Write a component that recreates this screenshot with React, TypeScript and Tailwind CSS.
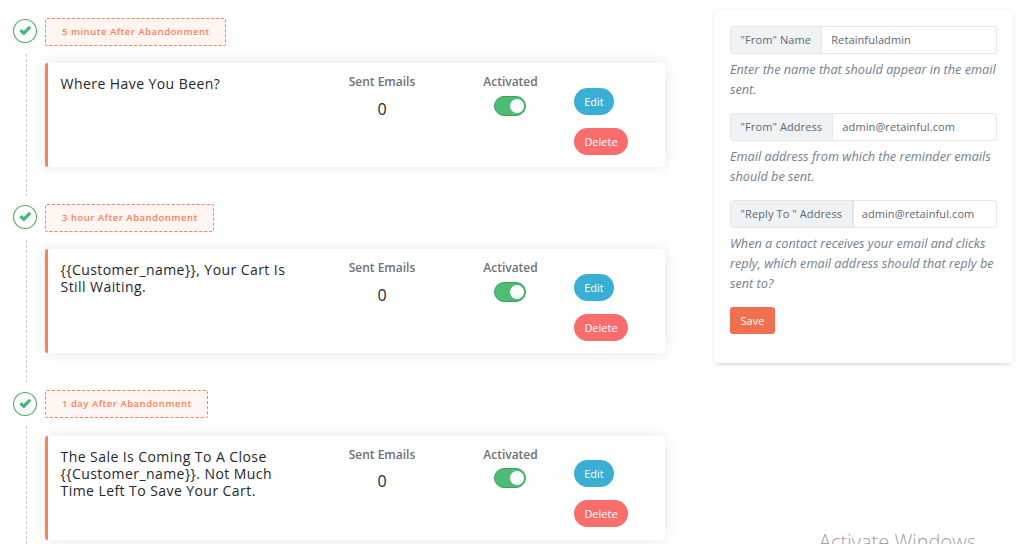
type Step = { delay: string; subject: string; sent: number };

const steps: Step[] = [
  { delay: '5 minute After Abandonment', subject: 'Where Have You Been?', sent: 0 },
  { delay: '3 hour After Abandonment', subject: '{{Customer_name}}, Your Cart Is Still Waiting.', sent: 0 },
  {
    delay: '1 day After Abandonment',
    subject: 'The Sale Is Coming To A Close {{Customer_name}}. Not Much Time Left To Save Your Cart.',
    sent: 0,
  },
];

function CheckBadge() {
  return (
    <svg className="block h-6 w-6 shrink-0" viewBox="0 0 24 24" fill="none">
      <circle cx="12" cy="12" r="11.45" stroke="#4fb05c" strokeWidth="1.1" />
      <path d="M7.4 11.2 L10.8 14.2 L17.2 7.8" stroke="#41b877" strokeWidth="3.2" />
    </svg>
  );
}

function Toggle() {
  return (
    <div className="flex h-5 w-8 items-center justify-end rounded-full border border-[#3d9f60] bg-[#4dbd74] pr-px">
      <div className="h-3.5 w-3.5 rounded-full bg-white" />
    </div>
  );
}

function StepRow({ step }: { step: Step }) {
  return (
    <div className="flex h-[186.2px] shrink-0">
      <div className="flex w-8 shrink-0 flex-col pt-[1.2px]">
        <CheckBadge />
        <svg className="mt-[10.8px] ml-[13px] block h-[142px] w-px" viewBox="0 0 1 142">
          <path d="M.5 0V142" stroke="#cfcfcf" strokeWidth="1" strokeDasharray="3 2" />
        </svg>
      </div>
      <div className="flex flex-col items-start">
        <div className="flex h-7 items-center rounded-[2px] border border-dashed border-[#ff7f50] bg-[#fff6f3] pr-[15px] pl-4 text-[9.5px] font-semibold tracking-[0.5px] whitespace-nowrap text-[#ff7f50]">
          {step.delay}
        </div>
        <div className="mt-[17.2px] flex h-[104px] w-[620px] rounded-[3px] border-l-[3px] border-[#ff7f50] bg-white shadow-[0_0_14px_rgba(0,0,0,0.1)]">
          <div className="w-[257px] pt-3 pl-[12.6px] text-[14px] leading-[17px] font-medium tracking-[0.43px] text-[#23282c]">
            {step.subject}
          </div>
          <div className="flex w-[154px] flex-col items-center pt-[10px]">
            <div className="text-[12px] leading-[18px] font-semibold text-[#6f7174]">Sent Emails</div>
            <div className="mt-[6.8px] text-[16px] leading-[22px] font-medium text-[#23282c]">{step.sent}</div>
          </div>
          <div className="flex w-[103px] flex-col items-center pt-[10px]">
            <div className="text-[12px] leading-[18px] font-semibold text-[#6f7174]">Activated</div>
            <div className="mt-[4.8px] mr-[2px]">
              <Toggle />
            </div>
          </div>
          <div className="flex flex-col items-start gap-[13px] pt-[24.8px] pl-[12px] text-[11px] font-medium text-white">
            <button className="flex h-[27px] w-10 items-center justify-center rounded-full bg-[#3aafd6] pt-px">Edit</button>
            <button className="flex h-[27px] w-[54px] items-center justify-center rounded-full bg-[#f96d6d] pt-px">Delete</button>
          </div>
        </div>
      </div>
    </div>
  );
}

function Field({ label, value, hint, nested = false }: { label: string; value: string; hint: string; nested?: boolean }) {
  return (
    <div>
      <div className="flex h-7 w-[267px] overflow-hidden rounded-[3px] border border-[#e4e7ea] text-[11px] whitespace-nowrap text-[#5c6873]">
        <div className="flex items-center border-r border-[#e4e7ea] bg-[#f0f3f5] px-[9.6px] tracking-[0.1px]">{label}</div>
        <div
          className={
            nested
              ? 'flex items-center border-l border-[#e4e7ea] px-2 pt-px tracking-[0.1px]'
              : 'flex items-center px-[9.6px] tracking-[0.1px]'
          }
        >
          {value}
        </div>
      </div>
      <p className="mt-[5px] mb-px w-[268px] text-[12.7px] leading-5 text-[#73818f] italic">{hint}</p>
    </div>
  );
}

export default function App() {
  return (
    <div className="relative flex h-[544px] w-[1017px] items-start overflow-hidden bg-white font-['Open_Sans',sans-serif]">
      <div className="flex flex-col pt-[18px] pl-[13px]">
        {steps.map((s) => (
          <StepRow key={s.delay} step={s} />
        ))}
      </div>
      <div className="mt-[10px] ml-[49px] flex h-[353px] w-[299px] flex-col gap-[13px] rounded-[4px] bg-white pt-4 pl-4 shadow-[0_0_5px_rgba(0,0,0,0.08),0_4px_5px_-3px_rgba(0,0,0,0.14)]">
        <Field label={'"From" Name'} value="Retainfuladmin" hint="Enter the name that should appear in the email sent." />
        <Field label={'"From" Address'} value="admin@retainful.com" hint="Email address from which the reminder emails should be sent." />
        <Field
          nested
          label={'"Reply To " Address'}
          value="admin@retainful.com"
          hint="When a contact receives your email and clicks reply, which email address should that reply be sent to?"
        />
        <button className="flex h-[27px] w-[45px] items-center justify-center rounded-[3px] bg-[#f27052] pt-px text-[11px] font-medium text-white">
          Save
        </button>
      </div>
      <div className="absolute top-[528px] left-[819px] text-[20px] leading-7 font-light whitespace-nowrap text-[#a0a0a0]">
        Activate Windows
      </div>
    </div>
  );
}
